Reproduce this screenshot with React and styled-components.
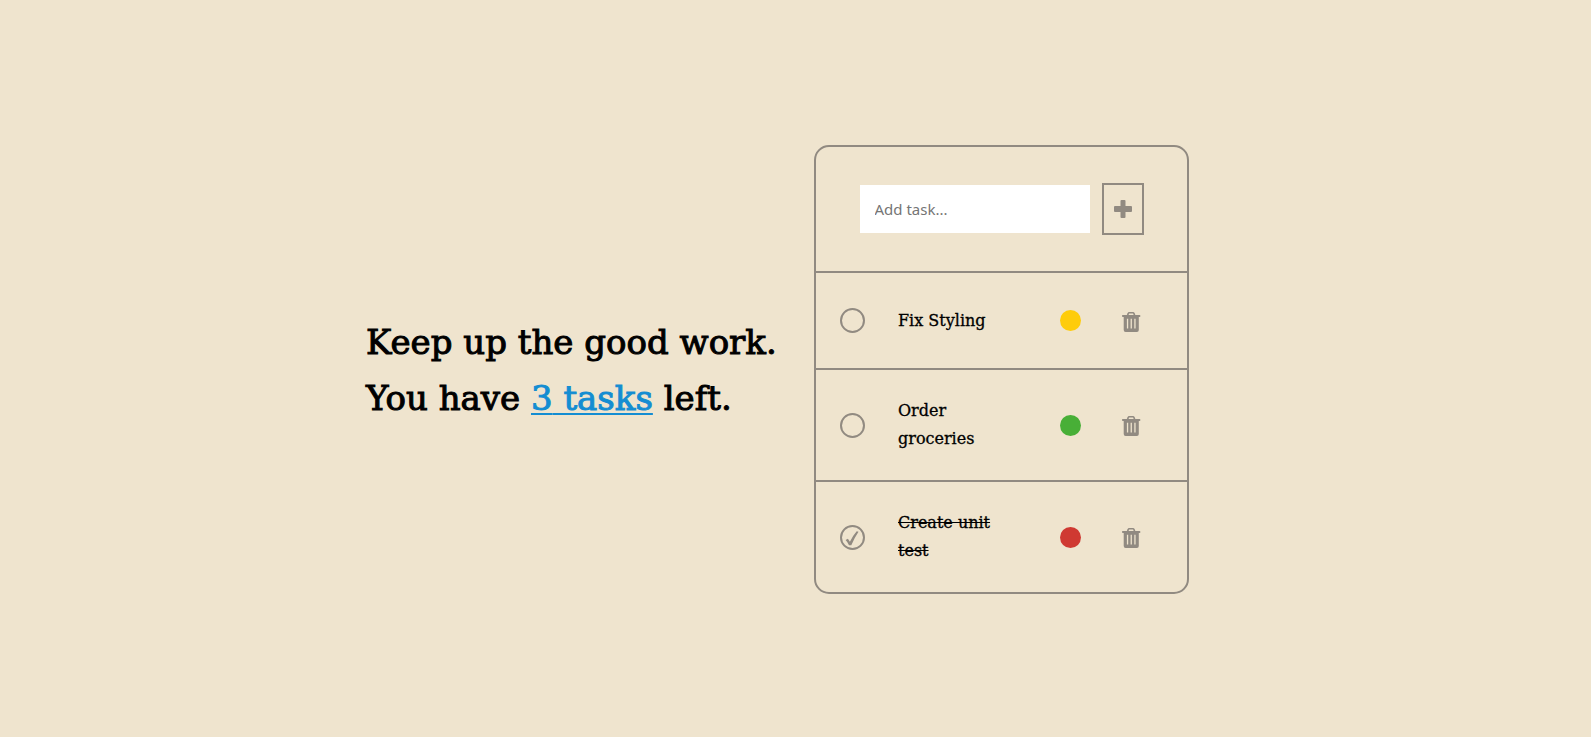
import React, { useState } from "react";
import styled, { createGlobalStyle, css } from "styled-components";

const INK = "#918a81";
const SLAB = '"DejaVu Serif", "Liberation Serif", serif';

const GlobalStyle = createGlobalStyle`
  *, *::before, *::after { box-sizing: border-box; }
  body {
    margin: 0;
    background: #efe4ce;
    color: #000;
    font-family: ${SLAB};
    font-size: 16px;
  }
`;

const Page = styled.main`
  min-height: 100vh;
  padding-top: 2px;
  display: flex;
  flex-wrap: wrap;
  align-items: center;
  align-content: center;
  justify-content: center;
`;

const Headline = styled.h1`
  margin: 0;
  min-width: 412px;
  font-size: 34px;
  line-height: 56px;
  font-weight: 400;
  -webkit-text-stroke: 1px currentColor;
`;

const TaskCount = styled.a`
  color: #148dd2;
  text-decoration: underline;
  text-decoration-thickness: 2px;
  text-underline-offset: 3px;
`;

const Card = styled.section`
  width: 375px;
  margin: 36px;
  border: 2px solid ${INK};
  border-radius: 15px;
`;

const AddForm = styled.form`
  display: flex;
  align-items: center;
  justify-content: center;
  gap: 12px;
  padding: 36px 24px;
`;

const TaskInput = styled.input`
  width: 230px;
  height: 48px;
  padding: 0 15px;
  border: 0;
  background: #fff;
  font-family: "Noto Sans", "Open Sans", sans-serif;
  font-size: 15px;
  &::placeholder { color: #757575; }
`;

const AddButton = styled.button`
  display: grid;
  place-items: center;
  width: 42px;
  height: 52px;
  padding: 0;
  border: 2px solid ${INK};
  background: transparent;
  color: ${INK};
  cursor: pointer;
`;

const TaskList = styled.ul`
  margin: 0;
  padding: 0;
  list-style: none;
`;

const TaskRow = styled.li`
  display: flex;
  align-items: center;
  min-height: 97px;
  padding: 27px 46px 27px 24px;
  border-top: 2px solid ${INK};
`;

const CheckWrap = styled.span`
  display: grid;
  margin-right: 33px;
  > * { grid-area: 1 / 1; }
  svg { pointer-events: none; }
`;

const RoundCheck = styled.input`
  appearance: none;
  width: 25px;
  height: 25px;
  margin: 0;
  border: 2px solid ${INK};
  border-radius: 50%;
  cursor: pointer;
`;

const TitleCell = styled.div`
  flex: 1;
`;

const TaskTitle = styled.label`
  display: block;
  max-width: 108px;
  line-height: 28px;
  -webkit-text-stroke: 0.3px currentColor;
  ${(p) => p.$done && css`text-decoration: line-through;`}
`;

const PriorityDot = styled.span`
  width: 21px;
  height: 21px;
  margin-right: 41px;
  border-radius: 50%;
  background: ${(p) => p.$color};
`;

const DeleteButton = styled.button`
  display: block;
  padding: 2px 0 0;
  border: 0;
  background: transparent;
  color: ${INK};
  cursor: pointer;
  svg { display: block; }
`;

const PlusIcon = () => (
  <svg width="18" height="18" viewBox="0 0 18 18" fill="currentColor" aria-hidden="true">
    <rect x="6.5" y="0" width="5" height="18" rx="1" />
    <rect x="0" y="6" width="18" height="6" rx="1" />
  </svg>
);

const TickIcon = () => (
  <svg width="25" height="25" viewBox="0 0 25 25" fill={INK} aria-hidden="true">
    <path d="M5.6 15L7.9 13.8L9.9 16.8Q12.6 11 16.7 6.3L18.5 6.7Q14.6 12.5 11.3 20.2H9Q7.8 17.3 5.6 15Z" />
  </svg>
);

const BinIcon = () => (
  <svg width="19" height="20" viewBox="0 0 19 20" aria-hidden="true">
    <path d="M5.5 3.5L6.3 1.4Q6.5 .8 7.2 .8H11Q11.6 .8 11.9 1.4L12.7 3.5" fill="none" stroke="currentColor" strokeWidth="1.6" />
    <path
      fill="currentColor"
      fillRule="evenodd"
      d="M.8 3H17.6Q18.4 3 18.4 3.9T17.6 5H16.8V18Q16.8 20 14.9 20H3.6Q1.7 20 1.7 18V5H.8Q0 5 0 3.9T.8 3ZM4.9 6.7V16.6H6.2V6.7ZM8.6 6.7V16.6H9.9V6.7ZM12.3 6.7V16.6H13.6V6.7Z"
    />
  </svg>
);

const initialTasks = [
  { id: 1, title: "Fix Styling", color: "#fecc0b", priority: "Medium", done: false },
  { id: 2, title: "Order groceries", color: "#48af37", priority: "Low", done: false },
  { id: 3, title: "Create unit test", color: "#cf3932", priority: "High", done: true },
];

export default function App() {
  const [tasks, setTasks] = useState(initialTasks);
  const [draft, setDraft] = useState("");

  const addTask = (e) => {
    e.preventDefault();
    if (!draft.trim()) return;
    setTasks([...tasks, { id: Date.now(), title: draft.trim(), color: "#48af37", priority: "Low", done: false }]);
    setDraft("");
  };
  const toggle = (id) => setTasks(tasks.map((t) => (t.id === id ? { ...t, done: !t.done } : t)));
  const remove = (id) => setTasks(tasks.filter((t) => t.id !== id));

  return (
    <>
      <GlobalStyle />
      <Page>
        <Headline>
          Keep up the good work.
          <br />
          You have <TaskCount href="#tasks">{tasks.length} tasks</TaskCount> left.
        </Headline>
        <Card id="tasks">
          <AddForm onSubmit={addTask}>
            <TaskInput
              aria-label="Add task"
              placeholder="Add task..."
              value={draft}
              onChange={(e) => setDraft(e.target.value)}
            />
            <AddButton type="submit" aria-label="Add">
              <PlusIcon />
            </AddButton>
          </AddForm>
          <TaskList>
            {tasks.map((t) => (
              <TaskRow key={t.id}>
                <CheckWrap>
                  <RoundCheck id={`task-${t.id}`} type="checkbox" checked={t.done} onChange={() => toggle(t.id)} />
                  {t.done && <TickIcon />}
                </CheckWrap>
                <TitleCell>
                  <TaskTitle htmlFor={`task-${t.id}`} $done={t.done}>{t.title}</TaskTitle>
                </TitleCell>
                <PriorityDot $color={t.color} role="img" aria-label={`${t.priority} priority`} />
                <DeleteButton type="button" aria-label={`Delete ${t.title}`} onClick={() => remove(t.id)}>
                  <BinIcon />
                </DeleteButton>
              </TaskRow>
            ))}
          </TaskList>
        </Card>
      </Page>
    </>
  );
}
